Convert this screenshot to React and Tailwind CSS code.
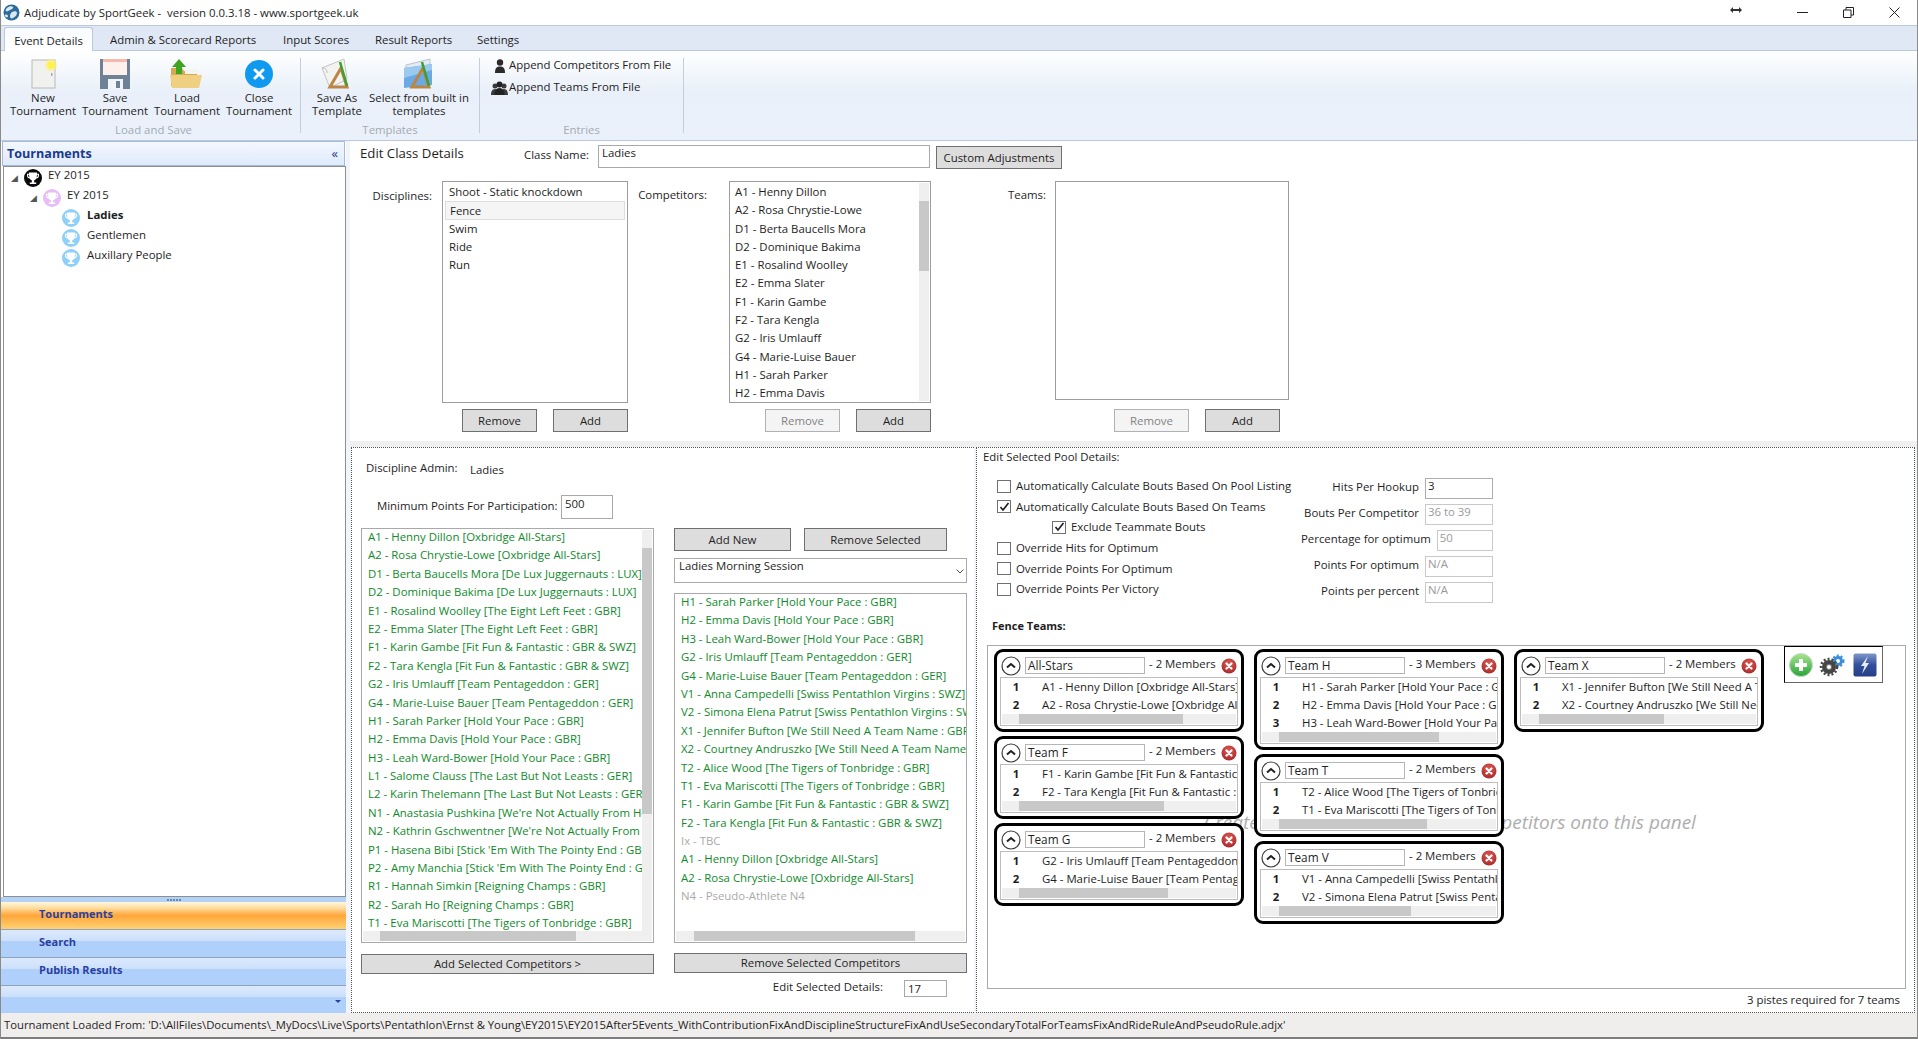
import React from "react";

const leftList = [
  "A1 - Henny Dillon [Oxbridge All-Stars]",
  "A2 - Rosa Chrystie-Lowe [Oxbridge All-Stars]",
  "D1 - Berta Baucells Mora [De Lux Juggernauts : LUX]",
  "D2 - Dominique Bakima [De Lux Juggernauts : LUX]",
  "E1 - Rosalind Woolley [The Eight Left Feet : GBR]",
  "E2 - Emma Slater [The Eight Left Feet : GBR]",
  "F1 - Karin Gambe [Fit Fun & Fantastic : GBR & SWZ]",
  "F2 - Tara Kengla [Fit Fun & Fantastic : GBR & SWZ]",
  "G2 - Iris Umlauff [Team Pentageddon : GER]",
  "G4 - Marie-Luise Bauer [Team Pentageddon : GER]",
  "H1 - Sarah Parker [Hold Your Pace : GBR]",
  "H2 - Emma Davis [Hold Your Pace : GBR]",
  "H3 - Leah Ward-Bower [Hold Your Pace : GBR]",
  "L1 - Salome Clauss [The Last But Not Leasts : GER]",
  "L2 - Karin Thelemann [The Last But Not Leasts : GER]",
  "N1 - Anastasia Pushkina [We're Not Actually From Here : GBR]",
  "N2 - Kathrin Gschwentner [We're Not Actually From Here : GBR]",
  "P1 - Hasena Bibi [Stick 'Em With The Pointy End : GBR]",
  "P2 - Amy Manchia [Stick 'Em With The Pointy End : GBR]",
  "R1 - Hannah Simkin [Reigning Champs : GBR]",
  "R2 - Sarah Ho [Reigning Champs : GBR]",
  "T1 - Eva Mariscotti [The Tigers of Tonbridge : GBR]",
];

const rightList = [
  "H1 - Sarah Parker [Hold Your Pace : GBR]",
  "H2 - Emma Davis [Hold Your Pace : GBR]",
  "H3 - Leah Ward-Bower [Hold Your Pace : GBR]",
  "G2 - Iris Umlauff [Team Pentageddon : GER]",
  "G4 - Marie-Luise Bauer [Team Pentageddon : GER]",
  "V1 - Anna Campedelli [Swiss Pentathlon Virgins : SWZ]",
  "V2 - Simona Elena Patrut [Swiss Pentathlon Virgins : SWZ]",
  "X1 - Jennifer Bufton [We Still Need A Team Name : GBR]",
  "X2 - Courtney Andruszko [We Still Need A Team Name : GBR]",
  "T2 - Alice Wood [The Tigers of Tonbridge : GBR]",
  "T1 - Eva Mariscotti [The Tigers of Tonbridge : GBR]",
  "F1 - Karin Gambe [Fit Fun & Fantastic : GBR & SWZ]",
  "F2 - Tara Kengla [Fit Fun & Fantastic : GBR & SWZ]",
  "Ix - TBC",
  "A1 - Henny Dillon [Oxbridge All-Stars]",
  "A2 - Rosa Chrystie-Lowe [Oxbridge All-Stars]",
  "N4 - Pseudo-Athlete N4",
];

const competitors = [
  "A1 - Henny Dillon",
  "A2 - Rosa Chrystie-Lowe",
  "D1 - Berta Baucells Mora",
  "D2 - Dominique Bakima",
  "E1 - Rosalind Woolley",
  "E2 - Emma Slater",
  "F1 - Karin Gambe",
  "F2 - Tara Kengla",
  "G2 - Iris Umlauff",
  "G4 - Marie-Luise Bauer",
  "H1 - Sarah Parker",
  "H2 - Emma Davis",
];

const teamColumns = [
  [
    { name: "All-Stars", rows: ["A1 - Henny Dillon [Oxbridge All-Stars]", "A2 - Rosa Chrystie-Lowe [Oxbridge All-Stars]"], thumb: 164 },
    { name: "Team F", rows: ["F1 - Karin Gambe [Fit Fun & Fantastic : GBR & SWZ]", "F2 - Tara Kengla [Fit Fun & Fantastic : GBR & SWZ]"], thumb: 145 },
    { name: "Team G", rows: ["G2 - Iris Umlauff [Team Pentageddon : GER]", "G4 - Marie-Luise Bauer [Team Pentageddon : GER]"], thumb: 149 },
  ],
  [
    { name: "Team H", rows: ["H1 - Sarah Parker [Hold Your Pace : GBR]", "H2 - Emma Davis [Hold Your Pace : GBR]", "H3 - Leah Ward-Bower [Hold Your Pace : GBR]"], thumb: 160 },
    { name: "Team T", rows: ["T2 - Alice Wood [The Tigers of Tonbridge : GBR]", "T1 - Eva Mariscotti [The Tigers of Tonbridge : GBR]"], thumb: 148 },
    { name: "Team V", rows: ["V1 - Anna Campedelli [Swiss Pentathlon Virgins : SWZ]", "V2 - Simona Elena Patrut [Swiss Pentathlon Virgins : SWZ]"], thumb: 132 },
  ],
  [
    { name: "Team X", rows: ["X1 - Jennifer Bufton [We Still Need A Team Name : GBR]", "X2 - Courtney Andruszko [We Still Need A Team Name : GBR]"], thumb: 125 },
  ],
];

function Logo() {
  return (
    <svg width="17" height="17" viewBox="0 0 17 17">
      <circle cx="8.5" cy="8.5" r="8" fill="#2c6c9c" />
      <path d="M4 4c2-2 5-2 6-1s-1 2-3 3-3 2-4 1 0-2 1-3zM9 8c2-1 5-1 5 1s-2 4-4 5-3 0-3-2 1-3 2-4zM2 11c1-1 3 0 3 1s-1 2-2 1-2-1-1-2z" fill="#dbe8f2" />
    </svg>
  );
}

function Trophy({ color }) {
  return (
    <svg width="18" height="18" viewBox="0 0 18 18" className="shrink-0">
      <circle cx="9" cy="9" r="9" fill={color} />
      <path d="M5 3.500h8v1.200h2v2c0 1.600-1.300 2.600-2.700 2.700-.5 1-1.200 1.600-2.100 1.800v2.300h2V15H5.800v-1.500h2v-2.300c-.9-.2-1.600-.8-2.100-1.800C4.300 9.300 3 8.300 3 6.700v-2h2zM4.200 5.800v.9c0 .8.5 1.300 1.200 1.500-.2-.7-.3-1.500-.4-2.400zM13.800 5.800H13c-.1.9-.2 1.700-.4 2.400.7-.2 1.200-.7 1.200-1.500z" fill="#fff" />
    </svg>
  );
}

function NewIcon() {
  return (
    <svg width="36" height="32" viewBox="0 0 36 32">
      <rect x="7" y="2" width="23" height="28" fill="#f1f1ef" stroke="#b9b9b5" />
      <rect x="26" y="15" width="1.5" height="3" fill="#aaa" />
      <circle cx="26" cy="7" r="6" fill="#fdf16a" opacity="0.6" />
      <circle cx="26" cy="7" r="3.5" fill="#fff34a" />
    </svg>
  );
}

function SaveIcon() {
  return (
    <svg width="36" height="32" viewBox="0 0 36 32">
      <path d="M3 1h30v30H3z" fill="#6f8196" />
      <rect x="6" y="1" width="24" height="16" fill="#fdf0ec" />
      <rect x="6" y="1" width="24" height="3" fill="#f6b9ab" />
      <rect x="11" y="21" width="15" height="10" fill="#f2f4f6" />
      <rect x="19" y="23" width="4" height="7" fill="#6f8196" />
    </svg>
  );
}

function LoadIcon() {
  return (
    <svg width="36" height="32" viewBox="0 0 36 32">
      <path d="M2 10h11l2 3h13v15H2z" fill="#d3aa55" />
      <path d="M16 11h13v5H16z" fill="#f4f4f0" />
      <path d="M1 17h32l-3 13H3z" fill="#efcf80" />
      <path d="M10 1l7 8h-4v7H7V9H3z" fill="#3fa41f" />
    </svg>
  );
}

function CloseIcon() {
  return (
    <svg width="30" height="30" viewBox="0 0 30 30">
      <circle cx="15" cy="15" r="14" fill="#0f9af0" />
      <path d="M11 11l8 8M19 11l-8 8" stroke="#fff" strokeWidth="3" strokeLinecap="round" />
    </svg>
  );
}

function TemplateIcon({ blue }) {
  return (
    <svg width="36" height="32" viewBox="0 0 36 32">
      {blue ? (
        <>
          <path d="M5 7l24-6v20L5 28z" fill="#e3ebf3" stroke="#b7c3cf" />
          <path d="M3 10l28-4v21L3 30z" fill="#6aa9e3" />
          <path d="M3 10l28-4v6L3 20z" fill="#9cc9f0" />
        </>
      ) : (
        <>
          <path d="M3 10L25 1l3 20-17 9z" fill="#f3f3f1" stroke="#c5c5c1" />
          <path d="M3 10c4 0 5 2 5 5" fill="none" stroke="#bcbcb8" />
        </>
      )}
      <path d="M22 10l6 19H11z" fill="none" stroke="#bd8544" strokeWidth="3" />
      <path d="M21 4l7 24" stroke="#3f9f2f" strokeWidth="2.5" />
    </svg>
  );
}

function PersonIcon() {
  return (
    <svg width="12" height="14" viewBox="0 0 12 14">
      <circle cx="6" cy="3.5" r="3.200" fill="#2b2b2b" />
      <path d="M1 14c0-4 1-6 3.500-6.500h3C10 8 11 10 11 14z" fill="#2b2b2b" />
    </svg>
  );
}

function GroupIcon() {
  return (
    <svg width="17" height="14" viewBox="0 0 17 14">
      <circle cx="4" cy="5" r="2.5" fill="#3a3a3a" />
      <circle cx="13" cy="5" r="2.5" fill="#3a3a3a" />
      <path d="M0 14c0-3 1-6 4-6s4 3 4 6zM9 14c0-3 1-6 4-6s4 3 4 6z" fill="#3a3a3a" />
      <circle cx="8.5" cy="3.5" r="3" fill="#222" />
      <path d="M3.500 14c0-4 1.500-7 5-7s5 3 5 7z" fill="#222" />
    </svg>
  );
}

function RibbonButton({ icon, lines, width }) {
  return (
    <div className={"flex flex-col items-center " + width}>
      <div className="h-[32px] flex items-center justify-center">{icon}</div>
      <div className="mt-[1px] text-center leading-[13px] whitespace-nowrap">
        {lines.map((line) => (
          <div key={line}>{line}</div>
        ))}
      </div>
    </div>
  );
}

function RibbonGroup({ label, width, children }) {
  return (
    <div className={"flex flex-col h-full " + width}>
      <div className="flex-1 flex pt-[7px]">{children}</div>
      <div className="h-[18px] leading-[16px] pb-[2px] text-center text-[#a4abb5]">{label}</div>
    </div>
  );
}

function RibbonSep() {
  return <div className="w-px h-[75px] mt-[7px] bg-[#c3cedc]" />;
}

function Button({ children, disabled, className }) {
  return (
    <button
      className={
        "flex items-center justify-center border " +
        (disabled ? "bg-[#f4f4f4] border-[#adb2b5] text-[#838383] " : "bg-[#dddddd] border-[#707070] text-[#1e1e1e] ") +
        className
      }
    >
      {children}
    </button>
  );
}

function HScroll({ left, thumb, className }) {
  return (
    <div className={"bg-[#efefef] " + className}>
      <div className="h-full bg-[#c8c8c8]" style={{ marginLeft: left, width: thumb }} />
    </div>
  );
}

function Check({ checked }) {
  return (
    <span className="w-[14px] h-[13px] shrink-0 border border-[#707070] bg-white flex items-center justify-center">
      {checked && (
        <svg width="11" height="10" viewBox="0 0 11 10">
          <path d="M1.500 5l2.500 3 5.500-7" fill="none" stroke="#222" strokeWidth="1.7" />
        </svg>
      )}
    </span>
  );
}

function CheckRow({ label, checked, indent }) {
  return (
    <div className={"h-[20.6px] flex items-center gap-[5px] whitespace-nowrap " + (indent ? "ml-[55px]" : "")}>
      <Check checked={checked} />
      <span className="-mt-[1px]">{label}</span>
    </div>
  );
}

function ValueRow({ label, value, disabled }) {
  return (
    <div className="h-[21px] flex justify-end gap-[6px] whitespace-nowrap">
      <span className="leading-[17px]">{label}</span>
      <div className={"w-[68px] h-[21px] border pl-[2px] leading-[14px] " + (disabled ? "border-[#c9c9c9] text-[#9a9a9a]" : "border-[#abadb3]")}>
        {value}
      </div>
    </div>
  );
}

function RedX() {
  return (
    <svg width="16" height="16" viewBox="0 0 16 16" className="shrink-0">
      <defs>
        <radialGradient id="redx" cx="50%" cy="35%" r="65%">
          <stop offset="0%" stopColor="#e05a55" />
          <stop offset="100%" stopColor="#a92b2b" />
        </radialGradient>
      </defs>
      <circle cx="8" cy="8" r="7.5" fill="url(#redx)" />
      <path d="M5.500 5.500l5 5M10.500 5.500l-5 5" stroke="#fff" strokeWidth="2.200" strokeLinecap="round" />
    </svg>
  );
}

function Collapse() {
  return (
    <svg width="20" height="20" viewBox="0 0 20 20" className="shrink-0">
      <circle cx="10" cy="10" r="9" fill="#fff" stroke="#3a3a3a" strokeWidth="1.2" />
      <path d="M6 11.500l4-3.500 4 3.500" fill="none" stroke="#222" strokeWidth="2" />
    </svg>
  );
}

function TeamCard({ team }) {
  return (
    <div className="relative w-[250px] border-[3px] border-black rounded-[9px] bg-white px-[3px] pt-[3px] pb-[3px]">
      <div className="flex items-center h-[21px]">
        <div className="ml-[1px]">
          <Collapse />
        </div>
        <div className="ml-[4px] w-[120px] h-[17px] border border-[#b5b5b5] pl-[2px] leading-[15px] text-[11.8px] whitespace-nowrap">
          {team.name}
        </div>
        <span className="ml-[4px] whitespace-nowrap -mt-[3px]">- {team.rows.length} Members</span>
        <div className="ml-auto mr-[1px]">
          <RedX />
        </div>
      </div>
      <div className="mt-[1px] border border-[#bdbdbd] overflow-hidden p-[1px]">
        {team.rows.map((row, i) => (
          <div key={row} className="flex h-[18px] leading-[15px] whitespace-nowrap">
            <span className="w-[28px] shrink-0 text-center font-bold">{i + 1}</span>
            <span className="ml-[12px]">{row}</span>
          </div>
        ))}
        <HScroll left={17} thumb={team.thumb} className="h-[10px] -mt-[1px]" />
      </div>
    </div>
  );
}

function ToolBox() {
  return (
    <div className="ml-[10px] -mt-[3px] w-[99px] h-[37px] border border-t-black border-l-black border-r-[#666] border-b-[#666] bg-white flex items-center pl-[4px] gap-[6px]">
      <svg width="24" height="24" viewBox="0 0 24 24">
        <defs>
          <linearGradient id="plusg" x1="0" y1="0" x2="0" y2="1">
            <stop offset="0%" stopColor="#a8e58f" />
            <stop offset="100%" stopColor="#27a33a" />
          </linearGradient>
        </defs>
        <circle cx="12" cy="12" r="11.5" fill="url(#plusg)" stroke="#c9d8c6" />
        <path d="M12 6v12M6 12h12" stroke="#fff" strokeWidth="4" />
      </svg>
      <svg width="27" height="24" viewBox="0 0 27 24">
        <circle cx="19" cy="8" r="3.500" fill="#fff" stroke="#3b8fd8" strokeWidth="3" />
        <circle cx="19" cy="8" r="5.500" fill="none" stroke="#3b8fd8" strokeWidth="2" strokeDasharray="2 2" />
        <circle cx="10" cy="14" r="5" fill="#777" stroke="#454545" strokeWidth="4" />
        <circle cx="10" cy="14" r="8" fill="none" stroke="#454545" strokeWidth="2.5" strokeDasharray="2 2" />
        <circle cx="10" cy="14" r="2" fill="#fff" />
      </svg>
      <svg width="24" height="24" viewBox="0 0 24 24" className="ml-[1px]">
        <defs>
          <linearGradient id="boltg" x1="0" y1="0" x2="0" y2="1">
            <stop offset="0%" stopColor="#7f97c8" />
            <stop offset="50%" stopColor="#32509c" />
            <stop offset="100%" stopColor="#263f86" />
          </linearGradient>
        </defs>
        <rect x="0.5" y="0.5" width="23" height="23" rx="2" fill="url(#boltg)" />
        <path d="M15 3l-7 10h3.500L9 21l7-11h-3.500z" fill="#e9edf5" />
      </svg>
    </div>
  );
}

function NavItem({ label, active }) {
  return (
    <div
      className={
        "h-[28px] border-b border-[#8fa3ba] pl-[38px] pb-[2px] flex items-center text-[11px] font-bold text-[#2a3f9f] " +
        (active
          ? "bg-[linear-gradient(to_bottom,#fff8df_0%,#ffdd9f_22%,#ffa63a_50%,#ffd274_100%)]"
          : "bg-[linear-gradient(to_bottom,#dce9fd_0%,#cbe0fc_42%,#b0d0fc_42%,#b0d0fc_100%)]")
      }
    >
      {label}
    </div>
  );
}

export default function App() {
  return (
    <div className="relative w-[1918px] h-[1039px] overflow-hidden bg-white text-[11.4px] text-[#1e1e1e] font-['Open_Sans',sans-serif] flex flex-col border-l border-r border-[#8a8a8a]">
      {/* title bar */}
      <div className="h-[25px] flex items-center shrink-0">
        <div className="ml-[2px]">
          <Logo />
        </div>
        <span className="ml-[4px] mt-[1px] whitespace-pre">Adjudicate by SportGeek -  version 0.0.3.18 - www.sportgeek.uk</span>
        <div className="ml-auto flex items-center">
          <svg width="12" height="8" viewBox="0 0 12 8" className="mr-[55px] -mt-[6px]">
            <path d="M0 4l3-3v2h6V1l3 3-3 3V5H3v2z" fill="#333" />
          </svg>
          <svg width="11" height="11" viewBox="0 0 11 11" className="mr-[35px]">
            <path d="M0 5.500h11" stroke="#222" />
          </svg>
          <svg width="11" height="11" viewBox="0 0 11 11" className="mr-[35px]">
            <path d="M.5 3h7.500v7.500H.5zM3 3V.5h7.500V8H8" fill="none" stroke="#222" />
          </svg>
          <svg width="11" height="11" viewBox="0 0 11 11" className="mr-[17px]">
            <path d="M.5.5l10 10M10.500.5l-10 10" stroke="#222" />
          </svg>
        </div>
      </div>

      {/* tabs */}
      <div className="h-[26px] shrink-0 border-t border-b border-[#b9c9de] bg-[#dfe8f4] flex pl-[3px] relative">
        <div className="mt-[1px] -mb-px w-[89px] border border-b-0 border-[#b9c9de] rounded-t-[3px] bg-[linear-gradient(to_bottom,#f8fbff,#ffffff)] flex items-center justify-center pt-[2px]">
          Event Details
        </div>
        <div className="flex items-center ml-[17px] pt-[3px]">
          <span className="w-[173px]">Admin &amp; Scorecard Reports</span>
          <span className="w-[92px]">Input Scores</span>
          <span className="w-[102px]">Result Reports</span>
          <span>Settings</span>
        </div>
      </div>

      {/* ribbon */}
      <div className="h-[90px] shrink-0 border-b border-[#b9c9de] bg-[linear-gradient(to_bottom,#ffffff_0%,#e9f0f9_45%,#ebf1fa_100%)] flex pl-[6px]">
        <RibbonGroup label="Load and Save" width="w-[293px]">
          <RibbonButton icon={<NewIcon />} lines={["New", "Tournament"]} width="w-[72px]" />
          <RibbonButton icon={<SaveIcon />} lines={["Save", "Tournament"]} width="w-[72px]" />
          <RibbonButton icon={<LoadIcon />} lines={["Load", "Tournament"]} width="w-[72px]" />
          <RibbonButton icon={<CloseIcon />} lines={["Close", "Tournament"]} width="w-[72px]" />
        </RibbonGroup>
        <RibbonSep />
        <RibbonGroup label="Templates" width="w-[178px]">
          <RibbonButton icon={<TemplateIcon />} lines={["Save As", "Template"]} width="w-[72px]" />
          <RibbonButton icon={<TemplateIcon blue />} lines={["Select from built in", "templates"]} width="w-[92px]" />
        </RibbonGroup>
        <RibbonSep />
        <RibbonGroup label="Entries" width="w-[203px]">
          <div className="pl-[11px] -mt-[3px] whitespace-nowrap">
            <div className="h-[22px] flex items-center gap-[1px]">
              <span className="w-[17px] flex justify-center">
                <PersonIcon />
              </span>
              <span className="-mt-[2px]">Append Competitors From File</span>
            </div>
            <div className="h-[22px] flex items-center gap-[1px]">
              <GroupIcon />
              <span className="-mt-[2px]">Append Teams From File</span>
            </div>
          </div>
        </RibbonGroup>
        <RibbonSep />
      </div>

      {/* main */}
      <div className="flex-1 flex min-h-0">
        {/* left navigator */}
        <div className="w-[345px] shrink-0 flex flex-col">
          <div className="h-[25px] mx-[1px] border border-[#a6bad4] bg-[linear-gradient(to_bottom,#f3f8ff,#dfeafa)] flex items-center justify-between pl-[4px] pr-[6px] text-[12.6px] font-bold text-[#1a3a8c]">
            <span className="mt-[1px]">Tournaments</span>
            <span className="text-[13px] font-normal leading-none">«</span>
          </div>
          <div className="h-[731px] ml-[2px] border border-[#8f8f8f] pt-[1px]">
            <div className="h-[20px] flex items-center">
              <span className="ml-[7px] w-[12px] text-[#555] text-[9px]">◢</span>
              <span className="ml-[1px]">
                <Trophy color="#0a0a0a" />
              </span>
              <span className="ml-[6px] -mt-[6px]">EY 2015</span>
            </div>
            <div className="h-[20px] flex items-center">
              <span className="ml-[26px] w-[12px] text-[#555] text-[9px]">◢</span>
              <span className="ml-[1px]">
                <Trophy color="#e6bdf5" />
              </span>
              <span className="ml-[6px] -mt-[6px]">EY 2015</span>
            </div>
            {["Ladies", "Gentlemen", "Auxillary People"].map((name, i) => (
              <div key={name} className="h-[20px] flex items-center pl-[58px]">
                <Trophy color="#8fd0f8" />
                <span className={"ml-[7px] -mt-[6px] " + (i === 0 ? "font-bold" : "")}>{name}</span>
              </div>
            ))}
          </div>
          <div className="h-[5px] bg-[#b4d1f6] flex items-center justify-center gap-[1px]">
            {[0, 1, 2, 3, 4].map((d) => (
              <span key={d} className="w-[2px] h-[2px] bg-[#6f86a6]" />
            ))}
          </div>
          <NavItem label="Tournaments" active />
          <NavItem label="Search" />
          <NavItem label="Publish Results" />
          <div className="h-[27px] bg-[linear-gradient(to_bottom,#dce9fd_0%,#cbe0fc_42%,#b0d0fc_42%,#b0d0fc_100%)] flex items-end justify-end pr-[5px] pb-[9px]">
            <svg width="6" height="4" viewBox="0 0 6 4">
              <path d="M0 0h6L3 3z" fill="#2a3f9f" />
            </svg>
          </div>
        </div>

        {/* details */}
        <div className="flex-1 min-w-0 flex flex-col pl-[4px] bg-[#f1f4f8]">
          {/* class details */}
          <div className="h-[306px] bg-white flex flex-col border-b-[6px] border-[#f0f0f0]">
            <div className="h-[40px] flex items-start pl-[10px] whitespace-nowrap">
              <span className="w-[164px] mt-[3px] text-[13.2px]">Edit Class Details</span>
              <span className="w-[74px] mt-[5px]">Class Name:</span>
              <div className="w-[332px] h-[23px] mt-[4px] border border-[#a9a9a9] pl-[3px] leading-[14px]">Ladies</div>
              <Button className="ml-[6px] mt-[5px] w-[126px] h-[23px]">Custom Adjustments</Button>
            </div>
            <div className="flex items-start">
              <span className="w-[82px] text-right mt-[6px]">Disciplines:</span>
              <div className="ml-[10px] w-[186px]">
                <div className="h-[222px] border border-[#9d9d9d] pt-[1px] px-[2px]">
                  {["Shoot - Static knockdown", "Fence", "Swim", "Ride", "Run"].map((d) => (
                    <div
                      key={d}
                      className={"h-[18.3px] leading-[17px] pl-[4px] " + (d === "Fence" ? "bg-[#f5f5f5] border border-[#dddddd] pl-[3px]" : "")}
                    >
                      {d}
                    </div>
                  ))}
                </div>
                <div className="mt-[6px] flex justify-end gap-[16px]">
                  <Button className="w-[75px] h-[23px]">Remove</Button>
                  <Button className="w-[75px] h-[23px]">Add</Button>
                </div>
              </div>
              <span className="ml-[10px] w-[69px] text-right mt-[5px]">Competitors:</span>
              <div className="ml-[22px] w-[202px]">
                <div className="h-[222px] border border-[#9d9d9d] flex">
                  <div className="flex-1 overflow-hidden pt-[1px] pl-[5px] whitespace-nowrap">
                    {competitors.map((c) => (
                      <div key={c} className="h-[18.3px] leading-[17px]">
                        {c}
                      </div>
                    ))}
                  </div>
                  <div className="w-[10px] my-[1px] mr-[1px] bg-[#efefef] pt-[18px]">
                    <div className="h-[70px] bg-[#c8c8c8]" />
                  </div>
                </div>
                <div className="mt-[6px] flex justify-end gap-[16px]">
                  <Button disabled className="w-[75px] h-[23px]">Remove</Button>
                  <Button className="w-[75px] h-[23px]">Add</Button>
                </div>
              </div>
              <span className="w-[115px] text-right mt-[5px]">Teams:</span>
              <div className="ml-[9px] w-[234px]">
                <div className="h-[219px] border border-[#9d9d9d]" />
                <div className="mt-[9px] pr-[9px] flex justify-end gap-[16px]">
                  <Button disabled className="w-[75px] h-[23px]">Remove</Button>
                  <Button className="w-[75px] h-[23px]">Add</Button>
                </div>
              </div>
            </div>
          </div>

          {/* admin */}
          <div className="flex-1 min-h-0 flex pl-[1px] pr-[2px]">
            {/* discipline admin */}
            <div className="w-[623px] shrink-0 bg-white border-l border-t border-b border-dotted border-[#555] pl-[9px]">
              <div className="h-[47px] flex pl-[5px] pt-[11px] whitespace-nowrap">
                <span className="w-[104px]">Discipline Admin:</span>
                <span className="mt-[2px]">Ladies</span>
              </div>
              <div className="h-[33px] flex items-start pl-[16px]">
                <span className="w-[184px] mt-[2px] whitespace-nowrap">Minimum Points For Participation:</span>
                <div className="w-[52px] h-[24px] border border-[#a9a9a9] pl-[3px] leading-[15px]">500</div>
              </div>
              <div className="flex gap-[20px]">
                <div className="w-[293px]">
                  <div className="h-[415px] border border-[#a9a9a9] flex flex-col">
                    <div className="flex-1 min-h-0 flex">
                      <div className="flex-1 min-w-0 overflow-hidden pl-[6px] text-[#108a2c] whitespace-nowrap">
                        {leftList.map((r) => (
                          <div key={r} className="h-[18.4px] leading-[16px]">
                            {r}
                          </div>
                        ))}
                      </div>
                      <div className="w-[10px] mr-[1px] mt-[1px] bg-[#efefef] pt-[18px]">
                        <div className="h-[266px] bg-[#c8c8c8]" />
                      </div>
                    </div>
                    <HScroll left={17} thumb={196} className="h-[10px] mx-[1px] mb-[1px]" />
                  </div>
                  <Button className="mt-[11px] w-full h-[20px]">Add Selected Competitors &gt;</Button>
                </div>
                <div className="w-[293px]">
                  <div className="flex gap-[13px]">
                    <Button className="w-[117px] h-[23px]">Add New</Button>
                    <Button className="w-[143px] h-[23px]">Remove Selected</Button>
                  </div>
                  <div className="mt-[7px] h-[25px] border border-[#a9a9a9] pl-[4px] leading-[14px] flex justify-between">
                    Ladies Morning Session
                    <svg width="8" height="5" viewBox="0 0 8 5" className="mt-[10px] mr-[2px]">
                      <path d="M.5.5L4 4 7.500.5" fill="none" stroke="#555" />
                    </svg>
                  </div>
                  <div className="mt-[10px] h-[350px] border border-[#a9a9a9] flex flex-col">
                    <div className="flex-1 min-h-0 overflow-hidden pl-[6px] text-[#108a2c] whitespace-nowrap">
                      {rightList.map((r) => (
                        <div
                          key={r}
                          className={"h-[18.4px] leading-[16px] " + (r.startsWith("Ix") || r.startsWith("N4") ? "text-[#aaaaaa]" : "")}
                        >
                          {r}
                        </div>
                      ))}
                    </div>
                    <HScroll left={18} thumb={221} className="h-[10px] mx-[1px] mb-[1px]" />
                  </div>
                  <Button className="mt-[10px] w-full h-[20px]">Remove Selected Competitors</Button>
                  <div className="mt-[7px] flex justify-end pr-[20px] whitespace-nowrap">
                    <span className="mr-[21px] -mt-[2px]">Edit Selected Details:</span>
                    <div className="w-[43px] h-[17px] border border-[#a9a9a9] pl-[3px] leading-[15px]">17</div>
                  </div>
                </div>
              </div>
            </div>

            <div className="w-[2px] shrink-0" />

            {/* pool details */}
            <div className="flex-1 min-w-0 bg-white border border-dotted border-[#555] pl-[6px] flex flex-col">
              <div className="h-[18px] leading-[18px]">Edit Selected Pool Details:</div>
              <div className="mt-[10px] flex h-[128px]">
                <div className="w-[318px] pl-[14px]">
                  <CheckRow label="Automatically Calculate Bouts Based On Pool Listing" />
                  <CheckRow label="Automatically Calculate Bouts Based On Teams" checked />
                  <CheckRow label="Exclude Teammate Bouts" checked indent />
                  <CheckRow label="Override Hits for Optimum" />
                  <CheckRow label="Override Points For Optimum" />
                  <CheckRow label="Override Points Per Victory" />
                </div>
                <div className="w-[192px] mt-[2px] flex flex-col gap-[5px]">
                  <ValueRow label="Hits Per Hookup" value="3" />
                  <ValueRow label="Bouts Per Competitor" value="36 to 39" disabled />
                  <ValueRow label="Percentage for optimum" value="50" disabled />
                  <ValueRow label="Points For optimum" value="N/A" disabled />
                  <ValueRow label="Points per percent" value="N/A" disabled />
                </div>
              </div>
              <div className="mt-[14px] h-[18px] pl-[9px] leading-[16px] font-bold text-[11px]">Fence Teams:</div>
              <div className="relative mt-[9px] ml-[4px] w-[919px] h-[344px] border border-[#a9a9a9] flex items-start gap-[10px] pl-[6px] pt-[3px]">
                <span className="absolute left-[216px] top-[162px] text-[19px] italic text-[#aeaeae] whitespace-nowrap">
                  Create new teams by dragging Competitors onto this panel
                </span>
                {teamColumns.map((col) => (
                  <div key={col[0].name} className="flex flex-col gap-[4px]">
                    {col.map((team) => (
                      <TeamCard key={team.name} team={team} />
                    ))}
                  </div>
                ))}
                <ToolBox />
              </div>
              <div className="mt-[2px] pr-[14px] text-right whitespace-nowrap">3 pistes required for 7 teams</div>
            </div>
          </div>
        </div>
      </div>

      {/* status bar */}
      <div className="h-[26px] shrink-0 bg-[#f0eded] border-b-2 border-[#7d7d7d] pl-[3px] flex items-center text-[11.3px] whitespace-nowrap">
        Tournament Loaded From: 'D:\AllFiles\Documents\_MyDocs\Live\Sports\Pentathlon\Ernst &amp; Young\EY2015\EY2015After5Events_WithContributionFixAndDisciplineStructureFixAndUseSecondaryTotalForTeamsFixAndRideRuleAndPseudoRule.adjx'
      </div>
    </div>
  );
}
